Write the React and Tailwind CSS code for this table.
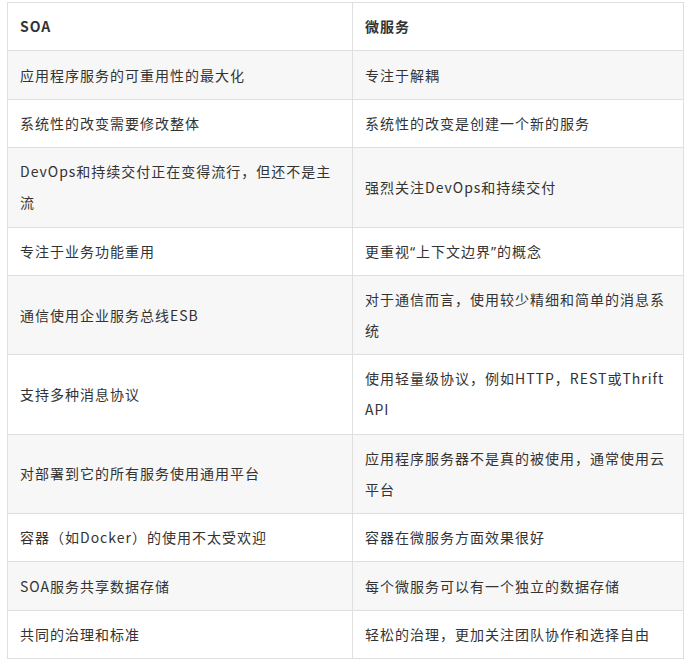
import React from "react";

const Q = ({ children }) => (
  <span style={{ fontFamily: '"Noto Sans", sans-serif' }}>{children}</span>
);

const rows = [
  ["应用程序服务的可重用性的最大化", "专注于解耦"],
  ["系统性的改变需要修改整体", "系统性的改变是创建一个新的服务"],
  [["DevOps和持续交付正在变得流行，但还不是主", "流"], "强烈关注DevOps和持续交付"],
  [
    "专注于业务功能重用",
    <>
      更重视<Q>“</Q>上下文边界<Q>”</Q>的概念
    </>,
  ],
  ["通信使用企业服务总线ESB", ["对于通信而言，使用较少精细和简单的消息系", "统"]],
  ["支持多种消息协议", ["使用轻量级协议，例如HTTP，REST或Thrift", "API"]],
  ["对部署到它的所有服务使用通用平台", ["应用程序服务器不是真的被使用，通常使用云", "平台"]],
  ["容器（如Docker）的使用不太受欢迎", "容器在微服务方面效果很好"],
  ["SOA服务共享数据存储", "每个微服务可以有一个独立的数据存储"],
  ["共同的治理和标准", "轻松的治理，更加关注团队协作和选择自由"],
];

function Cell({ content, left, bold }) {
  const lines = Array.isArray(content) ? content : [content];
  return (
    <div
      className={`${left ? "w-[345px] shrink-0 border-r border-[#dfdfdf]" : "flex-1 min-w-0"} flex flex-col justify-center px-3 py-[8.2px] whitespace-nowrap leading-[31px] ${bold ? "font-bold" : ""}`}
    >
      {lines.map((l, i) => (
        <div key={i} className="h-[31px] leading-[31px]">{l}</div>
      ))}
    </div>
  );
}

export default function App() {
  return (
    <div className="w-[690px] h-[665px] bg-white pt-[2px] pl-[7px]">
      <div
        className="w-[677px] border border-[#dfdfdf] text-[14px] tracking-[1px] text-[#333]"
        style={{ fontFamily: '"Noto Sans CJK SC", "Noto Sans", sans-serif' }}
      >
        <div className="flex border-b border-[#dfdfdf] bg-white">
          <Cell content="SOA" left bold />
          <Cell content="微服务" bold />
        </div>
        {rows.map((r, i) => (
          <div
            key={i}
            className={`flex ${i < rows.length - 1 ? "border-b border-[#dfdfdf]" : ""} ${i % 2 === 0 ? "bg-[#f7f7f7]" : "bg-white"}`}
          >
            <Cell content={r[0]} left />
            <Cell content={r[1]} />
          </div>
        ))}
      </div>
    </div>
  );
}
